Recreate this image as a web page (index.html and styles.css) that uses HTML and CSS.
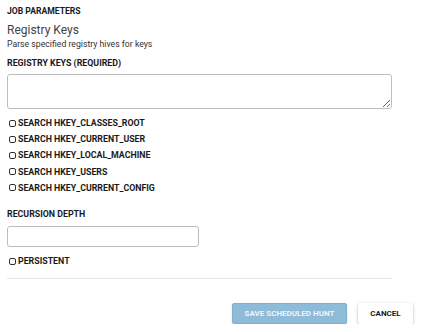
FILE: index.html
```html
<!DOCTYPE html>
<html lang="en">
<head>
  <meta charset="UTF-8">
  <title>Job Parameters</title>
  <link rel="stylesheet" href="styles.css">
</head>
<body>
  <div class="form">
    <div class="section-title">JOB PARAMETERS</div>
    <div class="job-name">Registry Keys</div>
    <div class="job-desc">Parse specified registry hives for keys</div>

    <label class="field-label">REGISTRY KEYS (REQUIRED)</label>
    <textarea class="keys-box"></textarea>

    <div class="checks">
      <label class="check"><span class="box"></span>SEARCH HKEY_CLASSES_ROOT</label>
      <label class="check"><span class="box"></span>SEARCH HKEY_CURRENT_USER</label>
      <label class="check"><span class="box"></span>SEARCH HKEY_LOCAL_MACHINE</label>
      <label class="check"><span class="box"></span>SEARCH HKEY_USERS</label>
      <label class="check"><span class="box"></span>SEARCH HKEY_CURRENT_CONFIG</label>
    </div>

    <label class="field-label depth-label">RECURSION DEPTH</label>
    <input class="depth-input" type="text">

    <label class="check persistent"><span class="box"></span>PERSISTENT</label>

    <div class="divider"></div>
  </div>

  <div class="actions">
    <button class="btn btn-save" disabled>SAVE SCHEDULED HUNT</button>
    <button class="btn btn-cancel">CANCEL</button>
  </div>
</body>
</html>
```

FILE: styles.css
```css
body {
  margin: 0;
  padding: 0 7px;
  font-family: Roboto, 'Liberation Sans', Arial, sans-serif;
  color: #1a1a1a;
  background: #fff;
}
.form {
  width: 385px;
  display: flex;
  flex-direction: column;
}
.section-title {
  margin-top: 6px;
  font-size: 8.6px;
  line-height: 10px;
  font-weight: bold;
}
.job-name {
  margin-top: 7px;
  font-size: 12px;
  line-height: 14px;
  color: #444;
}
.job-desc {
  margin-top: 2px;
  font-size: 8.7px;
  line-height: 10px;
  color: #333;
}
.field-label {
  margin-top: 9px;
  font-size: 8.8px;
  line-height: 10px;
  font-weight: bold;
}
.keys-box {
  margin-top: 6px;
  width: 385px;
  height: 35px;
  box-sizing: border-box;
  border: 1px solid #bdbdbd;
  border-radius: 3px;
  resize: vertical;
  font-family: inherit;
}
.checks {
  margin-top: 6px;
  display: flex;
  flex-direction: column;
}
.check {
  display: flex;
  align-items: center;
  height: 16.2px;
  font-size: 8.8px;
  font-weight: bold;
}
.box {
  width: 5px;
  height: 5px;
  border: 1px solid #333;
  border-radius: 2px;
  margin: 0 2px 0 2px;
}
.depth-label {
  margin-top: 13px;
}
.depth-input {
  margin-top: 7px;
  width: 192px;
  height: 21px;
  box-sizing: border-box;
  border: 1px solid #bdbdbd;
  border-radius: 3px;
}
.persistent {
  margin-top: 6px;
}
.divider {
  margin-top: 9px;
  height: 1px;
  background: #e6e6e6;
}
.actions {
  display: flex;
  justify-content: flex-end;
  gap: 11px;
  margin-top: 24px;
  padding-right: 6px;
}
.btn {
  height: 21px;
  padding: 0;
  font-family: inherit;
  font-size: 8px;
  font-weight: bold;
  border-radius: 2px;
  cursor: pointer;
}
.btn-save {
  width: 115px;
  background: #8dbbd8;
  border: 1px solid #7fb0d0;
  color: #eef5fa;
  box-shadow: 0 1px 2px rgba(0,0,0,0.15);
}
.btn-cancel {
  width: 55px;
  background: #fff;
  border: none;
  color: #1a1a1a;
  box-shadow: 0 1px 3px rgba(0,0,0,0.3);
}
```
